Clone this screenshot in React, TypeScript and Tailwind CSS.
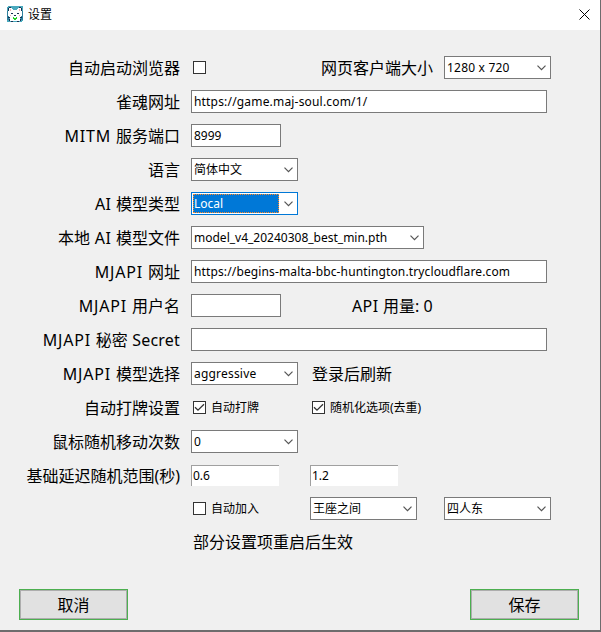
import type { ReactNode } from "react"

const FONT = "font-['Noto_Sans','Noto_Sans_CJK_SC',sans-serif]"

// latin words are set a little wider than the chinese text around them
function Wide({ children }: { children: ReactNode }) {
  return <span className="tracking-[0.8px]">{children}</span>
}

function Row({ label, children }: { label?: ReactNode; children?: ReactNode }) {
  return (
    <div className="flex h-[34px] items-center pb-px">
      <div className="w-[180px] shrink-0 pt-[2px] text-right text-[16px] leading-[23px]">{label}</div>
      <div className="ml-[11px] flex items-center">{children}</div>
    </div>
  )
}

function Entry({ value = "", width, spacing = "" }: { value?: string; width: string; spacing?: string }) {
  return (
    <div className={`flex h-[23px] items-center border border-[#7a7a7a] bg-white pl-[2px] text-[12px] leading-[21px] ${width}`}>
      <span className={spacing}>{value}</span>
    </div>
  )
}

function Combo({ value, width, spacing = "", focused = false }: { value: string; width: string; spacing?: string; focused?: boolean }) {
  return (
    <div
      className={`flex h-[23px] items-center justify-between border bg-white p-px text-[12px] ${width} ${
        focused ? "border-[#0078d7]" : "border-[#7a7a7a]"
      }`}
    >
      {focused ? (
        <span className="h-[19px] w-[86px] border border-dotted border-[#ff8728] bg-[#0078d7] leading-[17px] text-white">
          {value}
        </span>
      ) : (
        <span className={`pl-px leading-[19px] ${spacing}`}>{value}</span>
      )}
      <svg width="9" height="6" viewBox="0 0 9 6" className="mr-[3px] shrink-0" fill="none" stroke="#555" strokeWidth="1.2">
        <path d="M.5 .7 4.5 4.7 8.5 .7" />
      </svg>
    </div>
  )
}

function Check({ label, checked = false, width }: { label?: string; checked?: boolean; width: string }) {
  return (
    <div className={`flex items-center pl-[2px] ${width}`}>
      <span className="flex size-[13px] shrink-0 items-center justify-center border border-[#333] bg-white">
        {checked && (
          <svg width="11" height="11" viewBox="0 0 11 11" fill="none" stroke="#333" strokeWidth="1.3">
            <path d="M1 5.2 4 8.2 10 2.2" />
          </svg>
        )}
      </span>
      <span className="ml-[5px] text-[12px] leading-[17px] whitespace-nowrap">{label}</span>
    </div>
  )
}

function Spin({ value }: { value: string }) {
  return (
    <div className="h-[21px] w-[88px] border-t border-l border-[#a0a0a0] bg-white pl-px text-[12px] leading-[20px]">
      {value}
    </div>
  )
}

function AppIcon() {
  return (
    <svg width="16" height="16" viewBox="0 0 16 16" shapeRendering="crispEdges">
      <rect width="16" height="16" rx="2" fill="#4aa9bd" />
      <path d="M0 5h2v9H0zM14 5h2v9h-2z" fill="#2e7f9c" />
      <path d="M2 2h3v1h1v1h4V3h1V2h3v3h1v5h-1v2h-1v3H3v-3H2v-2H1V5h1z" fill="#fff" />
      <path d="M2 1h2v1H2zM12 1h2v1h-2zM1 2h1v3H1zM14 2h1v3h-1zM4 7h2v1H4zM10 7h2v1h-2zM7 9h2v1H7zM1 11h2v1H1zM13 11h2v1h-2zM2 13h1v2H2zM13 13h1v2h-1zM4 15h2v1H4zM10 15h2v1h-2z" fill="#173052" />
      <path d="M3 3h1v2H3zM12 3h1v2h-1zM3 9h1v1H3zM12 9h1v1h-1z" fill="#efb4b6" />
      <path d="M6 11h1v1h2v-1h1v2H9v1H7v-1H6z" fill="#22d422" />
    </svg>
  )
}

export default function App() {
  return (
    <div className={`flex h-[632px] w-[601px] flex-col overflow-hidden border-r border-b-2 border-[#6e6c6d] bg-[#f0f0f0] text-black ${FONT}`}>
      <header className="flex h-[30px] shrink-0 items-center bg-white pr-[10px] pl-[7px]">
        <div className="pb-[2px]">
          <AppIcon />
        </div>
        <span className="ml-[5px] text-[12px] leading-[16px]">设置</span>
        <svg width="11" height="11" viewBox="0 0 11 11" className="mb-[2px] ml-auto" fill="none" stroke="#000">
          <path d="M.5 .5l10 10M10.5 .5l-10 10" />
        </svg>
      </header>

      <main className="flex flex-col pt-[21px]">
        <Row label="自动启动浏览器">
          <Check width="w-[130px]" />
          <span className="w-[123px] pt-[2px] text-[16px] leading-[21px]">网页客户端大小</span>
          <Combo value="1280 x 720" width="w-[107px]" spacing="tracking-[0.2px]" />
        </Row>
        <Row label="雀魂网址">
          <Entry value="https://game.maj-soul.com/1/" width="w-[356px]" spacing="tracking-[0.18px]" />
        </Row>
        <Row label={<><Wide>MITM </Wide>服务端口</>}>
          <Entry value="8999" width="w-[90px]" />
        </Row>
        <Row label="语言">
          <Combo value="简体中文" width="w-[107px]" />
        </Row>
        <Row label={<><span className="tracking-[0.4px]">AI </span>模型类型</>}>
          <Combo value="Local" width="w-[107px]" focused />
        </Row>
        <Row label={<>本地<span className="tracking-[0.5px]"> AI </span>模型文件</>}>
          <Combo value="model_v4_20240308_best_min.pth" width="w-[233px]" />
        </Row>
        <Row label={<><Wide>MJAPI </Wide>网址</>}>
          <Entry value="https://begins-malta-bbc-huntington.trycloudflare.com" width="w-[356px]" spacing="tracking-[0.13px]" />
        </Row>
        <Row label={<><Wide>MJAPI </Wide>用户名</>}>
          <Entry width="w-[90px]" />
          <span className="ml-[71px] pt-[2px] text-[16px] leading-[21px]">
            <span className="tracking-[0.4px]">API </span>用量: 0
          </span>
        </Row>
        <Row label={<><Wide>MJAPI </Wide>秘密<span className="tracking-[0.2px]"> Secret</span></>}>
          <Entry width="w-[356px]" />
        </Row>
        <Row label={<><Wide>MJAPI </Wide>模型选择</>}>
          <Combo value="aggressive" width="w-[107px]" spacing="tracking-[0.2px]" />
          <span className="ml-[14px] pt-[2px] text-[16px] leading-[21px]">登录后刷新</span>
        </Row>
        <Row label="自动打牌设置">
          <Check label="自动打牌" width="w-[119px]" checked />
          <Check label="随机化选项(去重)" width="w-[134px]" checked />
        </Row>
        <Row label="鼠标随机移动次数">
          <Combo value="0" width="w-[107px]" />
        </Row>
        <Row label="基础延迟随机范围(秒)">
          <div className="flex gap-[31px]">
            <Spin value="0.6" />
            <Spin value="1.2" />
          </div>
        </Row>
        <div className="-mt-px">
          <Row>
            <Check label="自动加入" width="w-[119px]" />
            <Combo value="王座之间" width="w-[107px]" />
            <div className="ml-[27px]">
              <Combo value="四人东" width="w-[107px]" />
            </div>
          </Row>
          <Row>
            <span className="pl-[2px] text-[16px] leading-[23px]">部分设置项重启后生效</span>
          </Row>
        </div>
      </main>

      <footer className="mt-auto flex justify-between pr-[21px] pb-[10px] pl-[19px]">
        <button className="h-[31px] w-[109px] border border-[#4caf50] bg-[#e1e1e1] pt-[2px] text-[16px] leading-[27px] ring-1 ring-[#adadad] ring-inset">取消</button>
        <button className="h-[31px] w-[109px] border border-[#4caf50] bg-[#e1e1e1] pt-[2px] text-[16px] leading-[27px] ring-1 ring-[#adadad] ring-inset">保存</button>
      </footer>
    </div>
  )
}
